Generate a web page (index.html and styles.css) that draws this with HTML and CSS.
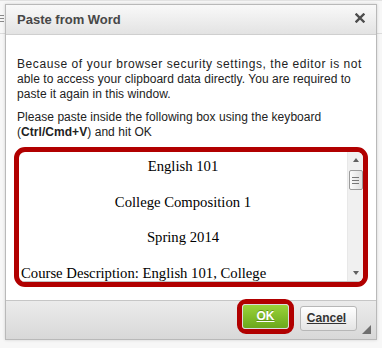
FILE: index.html
```html
<!DOCTYPE html>
<html>
	<head>
		<meta charset="utf-8">
		<title>Paste from Word</title>
		<link rel="stylesheet" href="styles.css">
	</head>
	<body>

		<div class="page">
			<div class="toolbar">
				<span class="tool-icon"></span>
			</div>
		</div>

		<div class="dialog">
			<div class="dialog-header">
				<span class="dialog-title">Paste from Word</span>
				<span class="dialog-close">
					<svg width="10" height="10" viewBox="0 0 10 10">
						<path d="M1.5 1.5 L8.5 8.5 M8.5 1.5 L1.5 8.5" stroke="#4d4d4d" stroke-width="2.4" stroke-linecap="square" />
					</svg>
				</span>
			</div>

			<div class="dialog-body">
				<p class="note">
					<span class="line wide">Because of your browser security settings, the editor is not</span>
					<span class="line">able to access your clipboard data directly. You are required to</span>
					<span class="line">paste it again in this window.</span>
				</p>
				<p class="note">
					<span class="line">Please paste inside the following box using the keyboard</span>
					<span class="line">(<b>Ctrl/Cmd+V</b>) and hit OK</span>
				</p>

				<div class="ring paste-ring">
					<div class="paste-box">
						<div class="paste-content">
							<p class="centered">English 101</p>
							<p class="centered">College Composition 1</p>
							<p class="centered">Spring 2014</p>
							<p>Course Description: English 101, College</p>
						</div>
						<div class="scrollbar">
							<span class="arrow arrow-up"></span>
							<span class="thumb"><i></i><i></i><i></i></span>
							<span class="track"></span>
							<span class="arrow arrow-down"></span>
						</div>
					</div>
				</div>
			</div>

			<div class="dialog-footer">
				<div class="ring ok-ring">
					<a class="btn btn-ok" href="#">OK</a>
				</div>
				<a class="btn btn-cancel" href="#">Cancel</a>
			</div>

			<span class="resizer"></span>
		</div>

	</body>
</html>
```

FILE: styles.css
```css
* {
	margin: 0;
	padding: 0;
	box-sizing: border-box;
}

body {
	width: 382px;
	height: 348px;
	overflow: hidden;
	background-color: #fff;
	font-family: "Liberation Sans", Arial, sans-serif;
	font-size: 12px;
	color: #222;
}

/* editor behind the dialog */
.page {
	height: 348px;
	background-color: #f7f7f7;
	border-top: 1px solid #e2e2e2;
}

.toolbar {
	height: 33px;
	border-bottom: 1px solid #dcdcdc;
	padding: 14px 0 0 0;
}

.tool-icon {
	display: block;
	width: 4px;
	height: 9px;
	background: repeating-linear-gradient(#8a8a8a 0, #8a8a8a 1px, transparent 1px, transparent 3px);
}

/* dialog */
.dialog {
	position: absolute;
	left: 5px;
	top: 4px;
	width: 372px;
	height: 336px;
	border: 1px solid #b9b9b9;
	background-color: #fff;
	box-shadow: 0 0 3px rgba(0, 0, 0, 0.15);
	display: flex;
	flex-direction: column;
}

.dialog-header {
	height: 30px;
	display: flex;
	align-items: center;
	justify-content: space-between;
	padding: 0 11px 0 11px;
	background: linear-gradient(#f9f9f9, #e3e3e3);
	border-bottom: 1px solid #cfcfcf;
}

.dialog-title {
	font-size: 13px;
	font-weight: bold;
	color: #474747;
}

.dialog-close {
	display: flex;
	margin: 0 0 3px 0;
}

.dialog-body {
	height: 265px;
	padding: 22px 11px 0 11px;
}

.note {
	line-height: 15px;
	white-space: nowrap;
	margin: 0 0 8px 0;
}

.line {
	display: block;
	letter-spacing: 0.05px;
}

.line.wide {
	letter-spacing: 0.57px;
}

/* red outline drawn round the parts to click */
.ring {
	border: 5px solid #b10000;
	border-radius: 11px;
}

.paste-ring {
	width: 354px;
	height: 140px;
	margin: -1px 0 0 -3px;
	overflow: hidden;
}

.paste-box {
	display: flex;
	height: 100%;
	border-bottom: 1px solid #c2c2c2;
	overflow: hidden;
}

.paste-content {
	flex-grow: 1;
	padding: 5px 2px 0 2px;
	font-family: "Liberation Serif", "Times New Roman", serif;
	font-size: 14.7px;
	line-height: 18px;
	color: #000;
	white-space: nowrap;
}

.paste-content p {
	margin: 0 0 17.5px 0;
}

.centered {
	text-align: center;
}

.scrollbar {
	width: 16px;
	display: flex;
	flex-direction: column;
	align-items: center;
	background-color: #f0f0f0;
	border-left: 1px solid #e8e8e8;
}

.arrow {
	height: 16px;
	width: 100%;
	display: flex;
	align-items: center;
	justify-content: center;
}

.arrow::after {
	content: "";
	border-left: 3.5px solid transparent;
	border-right: 3.5px solid transparent;
}

.arrow-up::after {
	border-bottom: 4px solid #606060;
}

.arrow-down::after {
	border-top: 4px solid #606060;
}

.thumb {
	width: 14px;
	height: 20px;
	margin: 2px 0 0 0;
	border: 1px solid #9b9b9b;
	border-radius: 2px;
	background: linear-gradient(to right, #fbfbfb, #dedede);
	display: flex;
	flex-direction: column;
	align-items: center;
	justify-content: center;
	gap: 2px;
}

.thumb i {
	display: block;
	width: 7px;
	height: 1px;
	background-color: #777;
}

.track {
	flex-grow: 1;
}

/* footer */
.dialog-footer {
	height: 39px;
	display: flex;
	align-items: center;
	justify-content: flex-end;
	gap: 6px;
	padding: 0 19px 4px 0;
	background: linear-gradient(#ebebeb, #d8d8d8);
	border-top: 1px solid #c6c6c6;
}

.ok-ring {
	width: 57px;
	height: 35px;
	margin: -4px 0 0 0;
	border-radius: 9px;
}

.btn {
	display: flex;
	align-items: center;
	justify-content: center;
	font-size: 12px;
	font-weight: bold;
	text-decoration: underline;
}

.btn-ok {
	height: 100%;
	border: 1px solid #dcdcdc;
	border-radius: 3px;
	background: linear-gradient(#9ad33a, #6ba81c);
	color: #fff;
	text-shadow: 0 -1px 0 rgba(60, 100, 0, 0.5);
}

.btn-cancel {
	width: 57px;
	height: 25px;
	padding: 0 4px 0 0;
	border: 1px solid #b7b7b7;
	border-radius: 3px;
	background: linear-gradient(#ffffff, #e4e4e4);
	color: #333;
}

.resizer {
	position: absolute;
	right: 5px;
	bottom: 5px;
	width: 0;
	height: 0;
	border-left: 9px solid transparent;
	border-bottom: 9px solid #6f6f6f;
}
```
